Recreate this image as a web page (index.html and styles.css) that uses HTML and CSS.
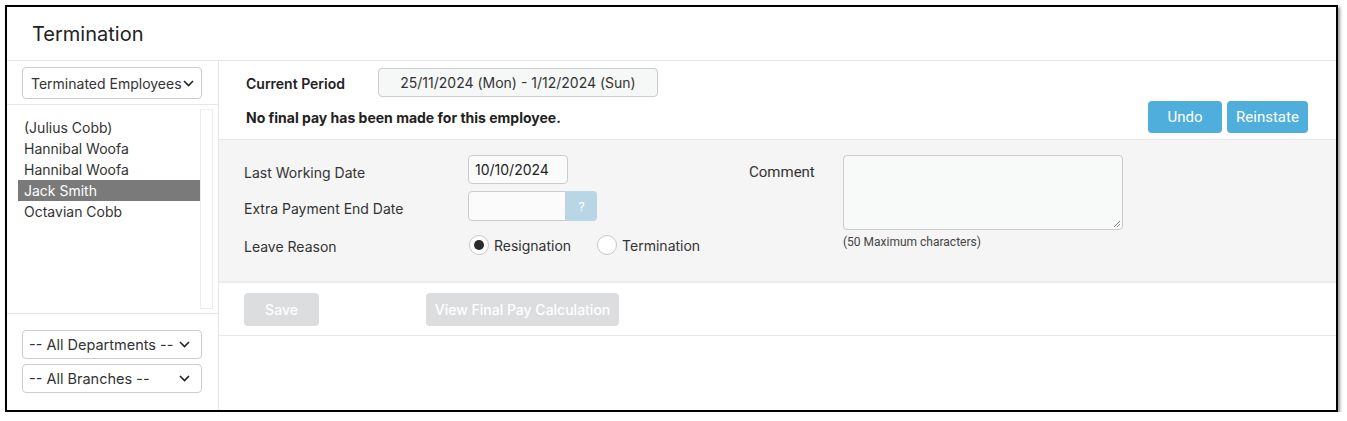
FILE: index.html
```html
<!DOCTYPE html>
<html lang="en">
<head>
<meta charset="utf-8">
<title>Termination</title>
<link rel="stylesheet" href="styles.css">
</head>
<body>
<div class="frame">
  <header class="header"><h1 class="title">Termination</h1></header>
  <div class="body">
    <aside class="side">
      <div class="side-top">
        <div class="select select-emp"><span class="select-text">Terminated Employees</span><svg class="chev" width="11" height="7" viewBox="0 0 11 7"><path d="M1 1l4.5 4.5L10 1" fill="none" stroke="#222" stroke-width="1.6"/></svg></div>
      </div>
      <div class="side-list">
        <ul class="list">
          <li class="item">(Julius Cobb)</li>
          <li class="item">Hannibal Woofa</li>
          <li class="item">Hannibal Woofa</li>
          <li class="item selected">Jack Smith</li>
          <li class="item">Octavian Cobb</li>
        </ul>
        <div class="scroll"></div>
      </div>
      <div class="side-bottom">
        <div class="select select-filter"><span class="select-text">-- All Departments --</span><svg class="chev" width="11" height="7" viewBox="0 0 11 7"><path d="M1 1l4.5 4.5L10 1" fill="none" stroke="#222" stroke-width="1.6"/></svg></div>
        <div class="select select-filter"><span class="select-text">-- All Branches --</span><svg class="chev" width="11" height="7" viewBox="0 0 11 7"><path d="M1 1l4.5 4.5L10 1" fill="none" stroke="#222" stroke-width="1.6"/></svg></div>
      </div>
    </aside>
    <main class="main">
      <section class="top">
        <div class="period-row">
          <span class="period-label">Current Period</span>
          <div class="period-box">25/11/2024 (Mon) - 1/12/2024 (Sun)</div>
        </div>
        <div class="msg-row">
          <span class="msg">No final pay has been made for this employee.</span>
          <div class="actions">
            <button class="btn btn-blue btn-undo">Undo</button>
            <button class="btn btn-blue btn-reinstate">Reinstate</button>
          </div>
        </div>
      </section>
      <section class="form">
        <div class="fields">
          <label class="label">Last Working Date</label>
          <div class="input input-date">10/10/2024</div>
          <label class="label">Extra Payment End Date</label>
          <div class="input-group"><div class="input input-extra"></div><span class="help">?</span></div>
          <label class="label label-reason">Leave Reason</label>
          <div class="radios">
            <span class="radio checked"></span><span class="radio-label">Resignation</span>
            <span class="radio radio-second"></span><span class="radio-label">Termination</span>
          </div>
        </div>
        <div class="comment">
          <label class="label comment-label">Comment</label>
          <div class="comment-box">
            <div class="textarea"><svg class="grip" width="8" height="8" viewBox="0 0 8 8"><path d="M7 1L1 7M7 4L4 7" stroke="#888" stroke-width="1"/></svg></div>
            <div class="hint">(50 Maximum characters)</div>
          </div>
        </div>
      </section>
      <section class="bar">
        <button class="btn btn-grey btn-save">Save</button>
        <button class="btn btn-grey btn-view">View Final Pay Calculation</button>
      </section>
    </main>
  </div>
</div>
</body>
</html>
```

FILE: styles.css
```css
* { box-sizing: border-box; }
html, body { margin: 0; padding: 0; background: #fff; }
body { font-family: Inter, "Noto Sans", sans-serif; font-size: 14px; color: #333; }

.frame {
  margin: 5px 0 0 5px;
  width: 1333px;
  height: 407px;
  border: 2px solid #000;
  box-shadow: 2px 2px 3px rgba(0,0,0,0.4);
  display: flex;
  flex-direction: column;
  overflow: hidden;
}
.header {
  height: 54px;
  border-bottom: 1px solid #e6e6e6;
  display: flex;
  align-items: center;
  padding-left: 25px;
  flex: none;
}
.title { margin: 0; font-size: 20px; font-weight: 400; color: #222; padding-top: 0; }

.body { display: flex; flex: 1; min-height: 0; }

.side {
  width: 212px;
  border-right: 1px solid #e6e6e6;
  display: flex;
  flex-direction: column;
  flex: none;
}
.side-top {
  padding: 6px 0 5px 15px;
  border-bottom: 1px solid #e6e6e6;
}
.select {
  width: 180px;
  height: 29px;
  border: 1px solid #ccc;
  border-radius: 4px;
  display: flex;
  align-items: center;
  padding: 0 11px 0 8px;
  background: #fff;
  color: #333;
  font-size: 14px;
  overflow: hidden;
  white-space: nowrap;
}
.select-text { flex: 1; }
.select-emp { height: 32px; padding-right: 10px; }
.select-emp .select-text { flex: none; }
.select-emp .chev { margin-left: 1px; }
.chev { flex: none; }

.side-list {
  height: 209px;
  border-bottom: 1px solid #e6e6e6;
  display: flex;
  padding: 4px 5px 4px 11px;
}
.list { list-style: none; margin: 8px 0 0; padding: 0; width: 182px; }
.item { height: 21px; line-height: 21px; padding-left: 6px; color: #333; white-space: nowrap; }
.item.selected { background: #7a7a7a; color: #fff; }
.scroll { width: 13px; border: 1px solid #ececec; border-top-color: #f0f0f0; }

.side-bottom {
  padding: 16px 0 0 15px;
  display: flex;
  flex-direction: column;
  gap: 5px;
}
.select-filter { height: 29px; padding-left: 6px; font-size: 14.5px; }

.main { flex: 1; display: flex; flex-direction: column; }

.top {
  padding: 7px 28px 6px 27px;
  border-bottom: 1px solid #e8e8e8;
}
.period-row { display: flex; align-items: center; }
.period-label { width: 132px; font-weight: 600; color: #222; padding-top: 2px; }
.period-box {
  width: 280px;
  height: 29px;
  border: 1px solid #ccc;
  border-radius: 4px;
  background: #f6f7f7;
  display: flex;
  align-items: center;
  justify-content: center;
  color: #333;
}
.msg-row { display: flex; align-items: center; justify-content: space-between; margin-top: 4px; }
.msg { font-weight: 700; color: #222; }
.actions { display: flex; gap: 5px; }

.btn {
  border: none;
  border-radius: 4px;
  font-size: 14px;
  color: #fff;
  padding: 0;
  cursor: pointer;
}
.btn-blue { background: #4faedb; height: 32px; font-family: Roboto, "Liberation Sans", sans-serif; font-size: 15px; }
.btn-undo { width: 74px; }
.btn-reinstate { width: 81px; }

.form {
  background: #f5f5f5;
  border-bottom: 2px solid #ebebeb;
  padding: 15px 0 19px 25px;
  display: flex;
}
.fields {
  display: grid;
  grid-template-columns: 224px 281px;
  row-gap: 7px;
  align-items: center;
  grid-template-rows: 29px 30px 34px;
}
.label { color: #333; padding-top: 5px; }
.label-reason { padding-top: 2px; }
.input {
  height: 29px;
  border: 1px solid #ccc;
  border-radius: 4px;
  background: #fbfbfb;
  display: flex;
  align-items: center;
  padding-left: 6px;
  color: #222;
}
.input-date { width: 100px; }
.input-group { display: flex; height: 30px; }
.input-extra { width: 98px; height: 30px; border-radius: 4px 0 0 4px; }
.help {
  width: 31px;
  height: 30px;
  background: #b8d6e6;
  color: #fff;
  border-radius: 0 4px 4px 0;
  display: flex;
  align-items: center;
  justify-content: center;
  font-family: Roboto, "Liberation Sans", sans-serif;
  font-size: 13px;
}
.radios { display: flex; align-items: center; padding-left: 1px; }
.radio {
  width: 20px;
  height: 20px;
  border-radius: 50%;
  border: 1px solid #c8c8c8;
  background: #fff;
  display: flex;
  align-items: center;
  justify-content: center;
  flex: none;
}
.radio.checked::after {
  content: "";
  width: 10px;
  height: 10px;
  border-radius: 50%;
  background: #2b2b2b;
}
.radio-label { margin-left: 5px; color: #333; }
.radio-second { margin-left: 26px; }

.comment { display: flex; margin-left: 0; }
.comment-label { width: 94px; padding-top: 8px; font-family: Roboto, "Liberation Sans", sans-serif; font-size: 15px; color: #333; }
.comment-box { display: flex; flex-direction: column; }
.textarea {
  width: 280px;
  height: 75px;
  border: 1px solid #ccc;
  border-radius: 4px;
  background: #f8f9f9;
  position: relative;
}
.grip { position: absolute; right: 1px; bottom: 1px; }
.hint { font-family: Roboto, "Liberation Sans", sans-serif; font-size: 12px; color: #444; margin-top: 5px; }

.bar {
  padding: 10px 0 9px 25px;
  border-bottom: 1px solid #e8e8e8;
  display: flex;
}
.btn-grey { background: #dcdddf; height: 33px; font-weight: 500; font-family: Inter, "Noto Sans", sans-serif; }
.btn-save { width: 75px; }
.btn-view { width: 193px; margin-left: 107px; }
```
